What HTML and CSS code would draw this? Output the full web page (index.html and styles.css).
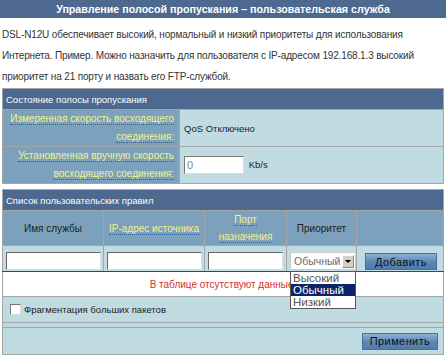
FILE: index.html
```html
<!DOCTYPE html>
<html lang="ru">
<head>
    <meta charset="UTF-8">
    <title>QoS</title>
    <link rel="stylesheet" href="styles.css">
</head>
<body>
    <div class="title">Управление полосой пропускания – пользовательская служба</div>
    <p class="desc">DSL-N12U обеспечивает высокий, нормальный и низкий приоритеты для использования Интернета. Пример. Можно назначить для пользователя с IP-адресом 192.168.1.3 высокий приоритет на 21 порту и назвать его FTP-службой.</p>

    <table class="form-table status">
        <colgroup><col class="w-label"><col></colgroup>
        <tr><td colspan="2" class="head">Состояние полосы пропускания</td></tr>
        <tr>
            <th><span class="hint">Измеренная скорость восходящего</span><br><span class="hint">соединения:</span></th>
            <td>QoS Отключено</td>
        </tr>
        <tr>
            <th><span class="hint">Установленная вручную скорость</span><br><span class="hint">восходящего соединения:</span></th>
            <td><input type="text" class="speed" value="0"> Kb/s</td>
        </tr>
    </table>

    <table class="form-table rules">
        <colgroup>
            <col class="w-name"><col class="w-ip"><col class="w-port"><col class="w-prio"><col>
        </colgroup>
        <tr><td colspan="5" class="head">Список пользовательских правил</td></tr>
        <tr class="cols">
            <th class="plain">Имя службы</th>
            <th><span class="hint">IP-адрес источника</span></th>
            <th><span class="hint">Порт</span><br><span class="hint">назначения</span></th>
            <th class="plain">Приоритет</th>
            <th></th>
        </tr>
        <tr class="inputs">
            <td><input type="text" class="field"></td>
            <td><input type="text" class="field"></td>
            <td><input type="text" class="field short"></td>
            <td class="sel-cell">
                <div class="select"><span>Обычный</span><i class="arrow"></i></div>
                <ul class="dropdown">
                    <li>Высокий</li>
                    <li class="on">Обычный</li>
                    <li>Низкий</li>
                </ul>
            </td>
            <td><button class="btn add">Добавить</button></td>
        </tr>
        <tr><td colspan="5" class="empty">В таблице отсутствуют данные.</td></tr>
        <tr><td colspan="5" class="frag"><span class="check"></span>Фрагментация больших пакетов</td></tr>
        <tr><td colspan="5" class="spacer"></td></tr>
        <tr><td colspan="5" class="apply"><button class="btn">Применить</button></td></tr>
    </table>
</body>
</html>
```

FILE: styles.css
```css
body {
    margin: 0;
    width: 446px;
    font-family: "Liberation Sans", Arial, sans-serif;
    font-size: 9.5px;
    color: #333;
    background: #fff;
}
.title {
    height: 18px;
    line-height: 18px;
    background: #4d6990;
    color: #fff;
    font-weight: bold;
    font-size: 10.7px;
    text-align: center;
}
.desc {
    max-width: 432px;
    margin: 6px 2px 0;
    line-height: 21px;
    font-size: 10px;
    letter-spacing: -0.15px;
    color: #333;
}
.form-table {
    width: 442px;
    margin: 1px 2px 0;
    border-collapse: collapse;
    border: 1px solid #a5a5a5;
    table-layout: fixed;
}
.form-table td, .form-table th {
    padding: 0;
    font-weight: normal;
}
.form-table .head {
    background: #4d6990;
    color: #fff;
    height: 20px;
    padding-left: 3px;
    border-bottom: 1px solid #a5a5a5;
}
.hint {
    color: #f3f38a;
    border-bottom: 1px dotted #2f5f9a;
    font-size: 10px;
}
.w-label { width: 177px; }
.status th {
    background: #7ba1bc;
    text-align: right;
    padding-right: 5px;
    line-height: 18px;
    height: 35px;
    border-bottom: 1px solid #a5a5a5;
}
.status td {
    background: #c1dbe3;
    padding-left: 4px;
    color: #222;
    border-bottom: 1px solid #a5a5a5;
    border-left: 1px solid #a5a5a5;
}
.speed {
    box-sizing: border-box;
    width: 60px;
    height: 18px;
    padding: 0 2px;
    border: 1px solid #777;
    border-right-color: #ddd;
    border-bottom-color: #ddd;
    font: 11px "Liberation Sans", Arial, sans-serif;
    color: #6a85a5;
    vertical-align: middle;
    margin-right: 2px;
}
.rules {
    margin-top: 5px;
}
.w-name { width: 101px; }
.w-ip { width: 101px; }
.w-port { width: 82px; }
.w-prio { width: 70px; }
.cols th {
    background: #7ba1bc;
    height: 34px;
    line-height: 17px;
    border-left: 1px solid #a5a5a5;
    text-align: center;
    font-size: 10px;
}
.cols .plain {
    color: #222;
}
.inputs td {
    background: #c1dbe3;
    height: 24px;
    border-left: 1px solid #a5a5a5;
    border-top: 1px solid #a5a5a5;
    border-bottom: 1px solid #444;
    text-align: center;
    vertical-align: bottom;
    padding-bottom: 1px;
}
.field {
    box-sizing: border-box;
    width: 95px;
    height: 18px;
    border: 1px solid #666;
    border-right-color: #ddd;
    border-bottom-color: #ddd;
    vertical-align: bottom;
}
.field.short {
    width: 75px;
}
.inputs .sel-cell {
    position: relative;
    text-align: left;
}
.select {
    display: flex;
    align-items: center;
    justify-content: space-between;
    box-sizing: border-box;
    width: 66px;
    height: 18px;
    margin-left: 3px;
    background: #fff;
    border: 1px solid #ccc;
    color: #6a6a6a;
    font-size: 10.5px;
    padding-left: 3px;
}
.arrow {
    width: 12px;
    height: 13px;
    margin-right: 1px;
    background: #d4d0c8;
    border: 1px solid #888;
    border-top-color: #fff;
    border-left-color: #fff;
    box-sizing: border-box;
    position: relative;
}
.arrow::after {
    content: "";
    position: absolute;
    left: 2px;
    top: 4px;
    border: 3px solid transparent;
    border-top: 3px solid #000;
}
.dropdown {
    position: absolute;
    left: 3px;
    top: 25px;
    z-index: 2;
    width: 64px;
    margin: 0;
    padding: 0;
    list-style: none;
    background: #fff;
    border: 1px solid #555;
    text-align: left;
    font-size: 11.5px;
    color: #555;
}
.dropdown li {
    height: 12px;
    line-height: 12px;
    padding-left: 2px;
}
.dropdown .on {
    background: #0a246a;
    color: #fff;
}
.btn {
    width: 72px;
    height: 17px;
    padding: 0;
    border: 1px solid #4c6f94;
    background: linear-gradient(#8fb2d6, #5d88b6 50%, #4f7cab);
    font: 11px "Liberation Sans", Arial, sans-serif;
    color: #111;
    letter-spacing: 0.4px;
    vertical-align: bottom;
}
.add {
    margin-left: 2px;
}
.empty {
    background: #fff;
    height: 24px;
    text-align: center;
    color: #d2302f;
    font-size: 10px;
    border-bottom: 1px solid #a5a5a5;
}
.form-table .frag {
    background: #c1dbe3;
    height: 25px;
    padding-left: 7px;
    color: #222;
    border-bottom: 1px solid #a5a5a5;
}
.check {
    display: inline-block;
    width: 9px;
    height: 9px;
    background: #fff;
    border: 1px solid #777;
    border-right-color: #ddd;
    border-bottom-color: #ddd;
    vertical-align: -2px;
    margin-right: 3px;
}
.spacer {
    background: #c1dbe3;
    height: 4px;
    border-bottom: 1px solid #a5a5a5;
}
.form-table .apply {
    background: #c1dbe3;
    height: 26px;
    text-align: right;
    padding-right: 5px;
}
.apply .btn {
    width: 76px;
    vertical-align: middle;
}
```
